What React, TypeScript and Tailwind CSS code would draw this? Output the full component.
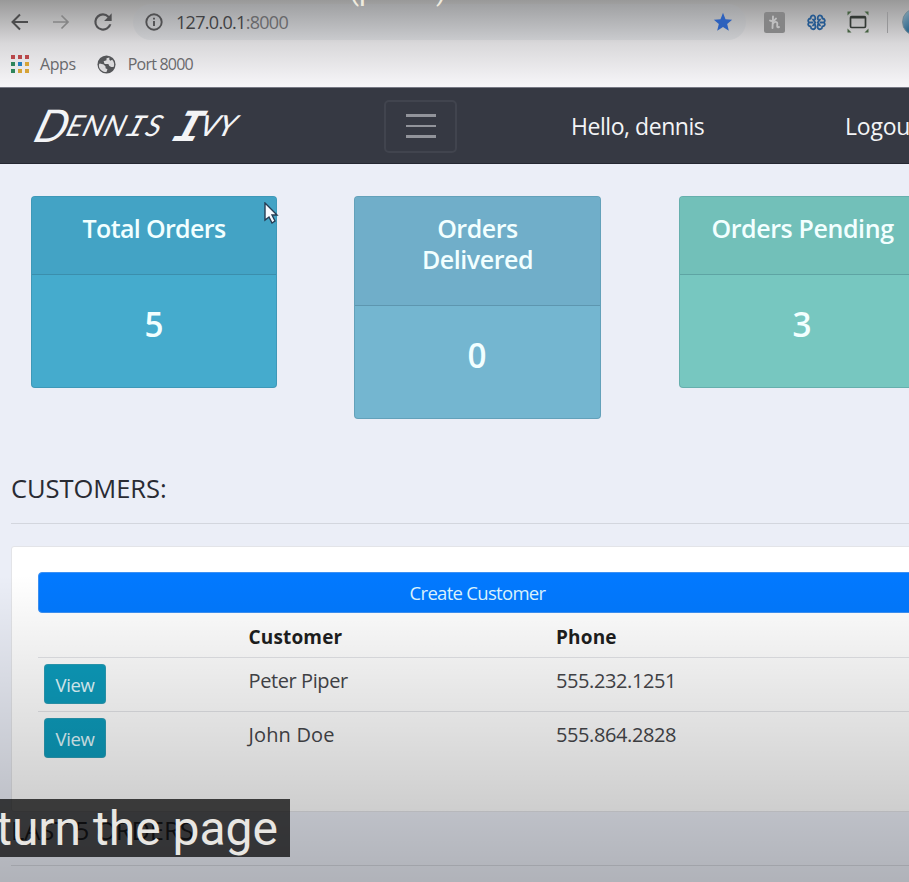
import type { ReactNode } from "react";

function Card({ title, value, head, body, wide, left, tracking }: { title: ReactNode; value: string; head: string; body: string; wide: string; left: string; tracking: string }) {
  return (
    <section className={`shrink-0 self-start overflow-hidden rounded-[4px] border border-[#245064]/20 text-center text-[#f2ffff] ${wide} ${left} ${body}`}>
      <div className={`border-b border-[#245064]/25 px-5 pt-[16px] pb-[30px] text-[25px] leading-[31px] font-semibold ${tracking} ${head}`}>
        {title}
      </div>
      <div className="h-[112px] pt-[27px] text-[35px] leading-[44px] font-semibold">
        <span className="inline-block scale-x-95">{value}</span>
      </div>
    </section>
  );
}

function Row({ name, phone, nameTracking }: { name: string; phone: string; nameTracking: string }) {
  return (
    <div className="flex h-[54px] border-t border-[#e3e4e8] pt-[6px] text-[20px] leading-[34px] text-[#45464a]">
      <div className="w-[210px] pl-[6px]">
        <button className="block h-[40px] w-[62px] rounded-[4px] border border-[#3f9fb3]/60 bg-[#0d9cbc] text-[18.5px] leading-[40px] font-medium tracking-[-0.4px] text-[#e2faff]">View</button>
      </div>
      <div className={`w-[308px] pl-[0.5px] ${nameTracking}`}>{name}</div>
      <div className="tracking-[-0.4px]">{phone}</div>
    </div>
  );
}

const appColors = ["#b8474a", "#b8474a", "#b8474a", "#2f855c", "#267fc0", "#d6a337", "#2f855c", "#d6a337", "#d6a337"];

export default function App() {
  return (
    <main className="relative flex h-[882px] w-[909px] flex-col overflow-hidden bg-[#ebeef7] font-['Open_Sans','Noto_Sans',sans-serif]">
      <header className="h-[88px] shrink-0 border-b border-[#777985] bg-linear-to-b from-[#999] via-[#d9d8da] to-[#f7f6f9]">
        <div className="flex h-[44px] items-center pl-[10px]">
          <svg className="mr-[20px] size-[20px] shrink-0" viewBox="0 0 20 20" fill="none" stroke="#4c4c4d" strokeWidth="2"><path d="M18 10H3M10 2.5 2.5 10l7.500 7.500" /></svg>
          <svg className="mr-[20px] size-[20px] shrink-0" viewBox="0 0 20 20" fill="none" stroke="#858586" strokeWidth="1.7"><path d="M3 10h15M11.500 3.500 18 10l-6.500 6.500" /></svg>
          <svg className="mr-[17px] size-[26px] shrink-0" viewBox="0 0 24 24" fill="#505052"><path d="M17.65 6.35A7.96 7.96 0 0 0 12 4a8 8 0 1 0 7.73 10h-2.08A6 6 0 1 1 12 6c1.66 0 3.14.69 4.22 1.78L13 11h7V4z" /></svg>
          <div className="flex h-[36px] w-[613px] shrink-0 items-center rounded-full bg-linear-to-b from-[#a0a1a3] to-[#c9cacd] pl-[12px]">
            <svg className="size-[18px]" viewBox="0 0 18 18" fill="none" stroke="#505052" strokeWidth="1.9"><circle cx="9" cy="9" r="7.700" /><path d="M9 8v5M9 4.700v1.800" /></svg>
            <span className="ml-[13px] text-[18px] tracking-[-0.7px] text-[#414143]">127.0.0.1<span className="text-[#68686b]">:8000</span></span>
            <svg className="mr-[13px] ml-auto size-[20px]" viewBox="0 0 24 24" fill="#2d61bd"><path d="m12 1 3 7.600 8 .6-6 5.200 2 8L12 18l-7 4.400 2-8-6-5.200 8-.6z" /></svg>
          </div>
          <svg className="ml-[18px] size-[21px] shrink-0" viewBox="0 0 21 21"><rect width="21" height="21" rx="2.500" fill="#858586" /><path d="M9 4.500 8.500 16M6 8.500c1.500 1 4.500.5 6-2M8.800 12c1-2.500 4.500-3 4.500-.5 0 2-.8 4.500 1.700 3.500" fill="none" stroke="#bfbfc0" strokeWidth="1.9" strokeLinecap="round" /></svg>
          <svg className="ml-[22px] h-[17px] w-[19px] shrink-0" viewBox="0 0 19 17" fill="none" stroke="#265a91" strokeWidth="1.8" strokeLinecap="round" strokeLinejoin="round"><path d="M8 5.500C9 2 6.500.500 4.500 2c-1 1-.8 2.500-.8 2.500C1 4.500.5 7 2.200 8.500.5 10 1 12.500 3.700 12.500c0 3 3.500 3.500 4.500 1.500.6-1 0-2.500-.2-3.500M11 5.500C10 2 12.500.500 14.500 2c1 1 .8 2.500.8 2.500 2.700 0 3.200 2.500 1.500 4 1.700 1.500 1.200 4-1.500 4 0 3-3.500 3.500-4.500 1.500-.6-1 0-2.500.2-3.500M6 5.500l2.300 3L6 11.500M13 5.500l-2.300 3 2.300 3M3.500 8.500h2M13.500 8.500h2" /></svg>
          <svg className="ml-[21px] size-[22px] shrink-0" viewBox="0 0 22 22"><rect x="3.500" y="5.500" width="15" height="11" rx="1.200" fill="none" stroke="#333935" strokeWidth="1.700" /><path d="M4 6.500h14" stroke="#333935" strokeWidth="2" /><path d="M.5.500h4l-4 4zM21.500.500v4l-4-4zM.5 21.500v-4l4 4zM21.500 21.500h-4l4-4z" fill="#456041" /></svg>
          <div className="ml-[18px] h-[21px] w-px shrink-0 bg-[#969698]" />
          <div className="ml-[14px] size-[28px] shrink-0 rounded-full border border-[#6f8794] bg-linear-to-br from-[#91aab5] via-[#316b90] to-[#176a9b]" />
        </div>
        <div className="flex h-[40px] items-center pl-[11px] text-[16px] text-[#69696c]">
          <div className="grid grid-cols-3 gap-[3px]">{appColors.map((color, i) => <i key={i} className="size-[4px]" style={{ background: color }} />)}</div>
          <span className="ml-[11px] tracking-[-0.4px]">Apps</span>
          <svg className="mr-[12px] ml-[21px] size-[19px]" viewBox="0 0 20 20"><circle cx="10" cy="10" r="9.500" fill="#555659" /><path d="M2 11c0-1 .5-2 1-2l4 1 2 2v2l2 1-1 3c-4 0-8-3-8-7zM13 2.500l-3 1v2l-3 1 1 3h4l1 2 2 1h2.500c1-2 .8-5-1.500-7.500l-2 1-1-1z" fill="#dad9db" /></svg>
          <span className="tracking-[-0.78px]">Port 8000</span>
        </div>
      </header>
      <nav className="flex h-[76px] shrink-0 items-center border-b border-[#252832] bg-[#363943] pt-px text-[23px] text-[#f3f4f6]">
        <div className="w-[384px] shrink-0 pl-[39px]">
          <div className="flex h-[48px] w-[220px] origin-left -translate-y-[7px] -skew-x-[18deg] items-baseline font-['Lato',sans-serif] text-[29px] leading-[48px] whitespace-nowrap italic">
            <span className="mr-[1px] inline-block w-[30px] translate-y-[6px] text-[45px]">D</span>
            <span className="tracking-[0.6px]">ENN</span>
            <span className="ml-px font-['Liberation_Mono',monospace] text-[31px]">I</span>
            <span className="ml-px">S</span>
            <span className="ml-[14px] inline-block w-[25px] translate-y-[5px] font-['Liberation_Mono',monospace] text-[46px] font-bold">I</span>
            <span className="font-medium">VY</span>
          </div>
        </div>
        <button className="flex h-[53px] w-[73px] shrink-0 flex-col items-center justify-center gap-[8px] rounded-[5px] border-2 border-[#41444e]">
          <i className="h-[2.5px] w-[30px] bg-[#92949b]" /><i className="h-[2.5px] w-[30px] bg-[#92949b]" /><i className="h-[2.5px] w-[30px] bg-[#92949b]" />
        </button>
        <span className="ml-[114px] w-[274px] shrink-0 tracking-[-0.45px]">Hello, dennis</span><span className="tracking-[-0.2px]">Logout</span>
      </nav>
      <div className="flex h-[303px] shrink-0 pt-[32px] pl-[31px]">
        <Card title="Total Orders" value="5" head="bg-[#43a3c5]" body="bg-[#45abcd]" wide="w-[246px]" left="" tracking="tracking-[-0.65px]" />
        <Card title={<>Orders<br />Delivered</>} value="0" head="bg-[#70aec9]" body="bg-[#74b6d0]" wide="w-[247px]" left="ml-[77px]" tracking="tracking-[-0.45px]" />
        <Card title="Orders Pending" value="3" head="bg-[#72c0b9]" body="bg-[#77c7c0]" wide="w-[247px]" left="ml-[78px]" tracking="tracking-[-0.4px] whitespace-nowrap" />
      </div>
      <div className="flex min-h-0 flex-1 flex-col pl-[11px]">
        <h2 className="h-[57px] shrink-0 border-b border-[#d3d6de] pt-[4px] text-[25.5px] leading-[34px] font-medium tracking-[-0.05px] text-[#292b33]">CUSTOMERS:</h2>
        <section className="mt-[22px] h-[266px] w-[933px] shrink-0 rounded-[3px] border border-[#e3e4e8] bg-white px-[26px] pt-[25px]">
          <button className="block h-[41px] w-full rounded-[4px] border border-[#3c91f4] bg-[#0279ff] text-[18.5px] leading-[39px] tracking-[-0.7px] text-[#dcf5ff]">Create Customer</button>
          <div className="flex h-[44px] pt-[7px] text-[19px] leading-[34px] font-bold tracking-[0.16px] text-[#1d1e20]"><span className="ml-[210px] w-[308px] pl-[0.5px]">Customer</span><span>Phone</span></div>
          <Row name="Peter Piper" phone="555.232.1251" nameTracking="tracking-[-0.4px]" />
          <Row name="John Doe" phone="555.864.2828" nameTracking="tracking-[0.15px]" />
        </section>
        <h2 className="h-[54px] shrink-0 border-b border-[#d3d6de] pt-[3px] text-[25.5px] leading-[30px] font-medium tracking-[-0.05px] text-[#292b33]">LAST 5 ORDERS</h2>
      </div>
      <div className="pointer-events-none absolute inset-x-0 top-[575px] bottom-0 bg-linear-to-b from-transparent to-black/25" />
      <div className="absolute top-[-27px] left-[349px] font-['Roboto',sans-serif] text-[29.5px] leading-[34px] text-[#eeeade]">(part 1)</div>
      <svg className="absolute top-[202px] left-[264px] h-[23px] w-[15px]" viewBox="0 0 15 23"><path d="M1 1v17l4-3 3 6 3-2-3-6h5z" fill="#f7faff" stroke="#263c53" strokeWidth="1.400" /></svg>
      <div className="absolute top-[799px] left-0 flex h-[58px] w-[290px] justify-end overflow-hidden bg-[#080808]/75 pr-[12px] font-['Roboto',sans-serif] text-[48px] leading-[60px] whitespace-nowrap text-[#e8e6e2]">turn the page</div>
    </main>
  );
}
